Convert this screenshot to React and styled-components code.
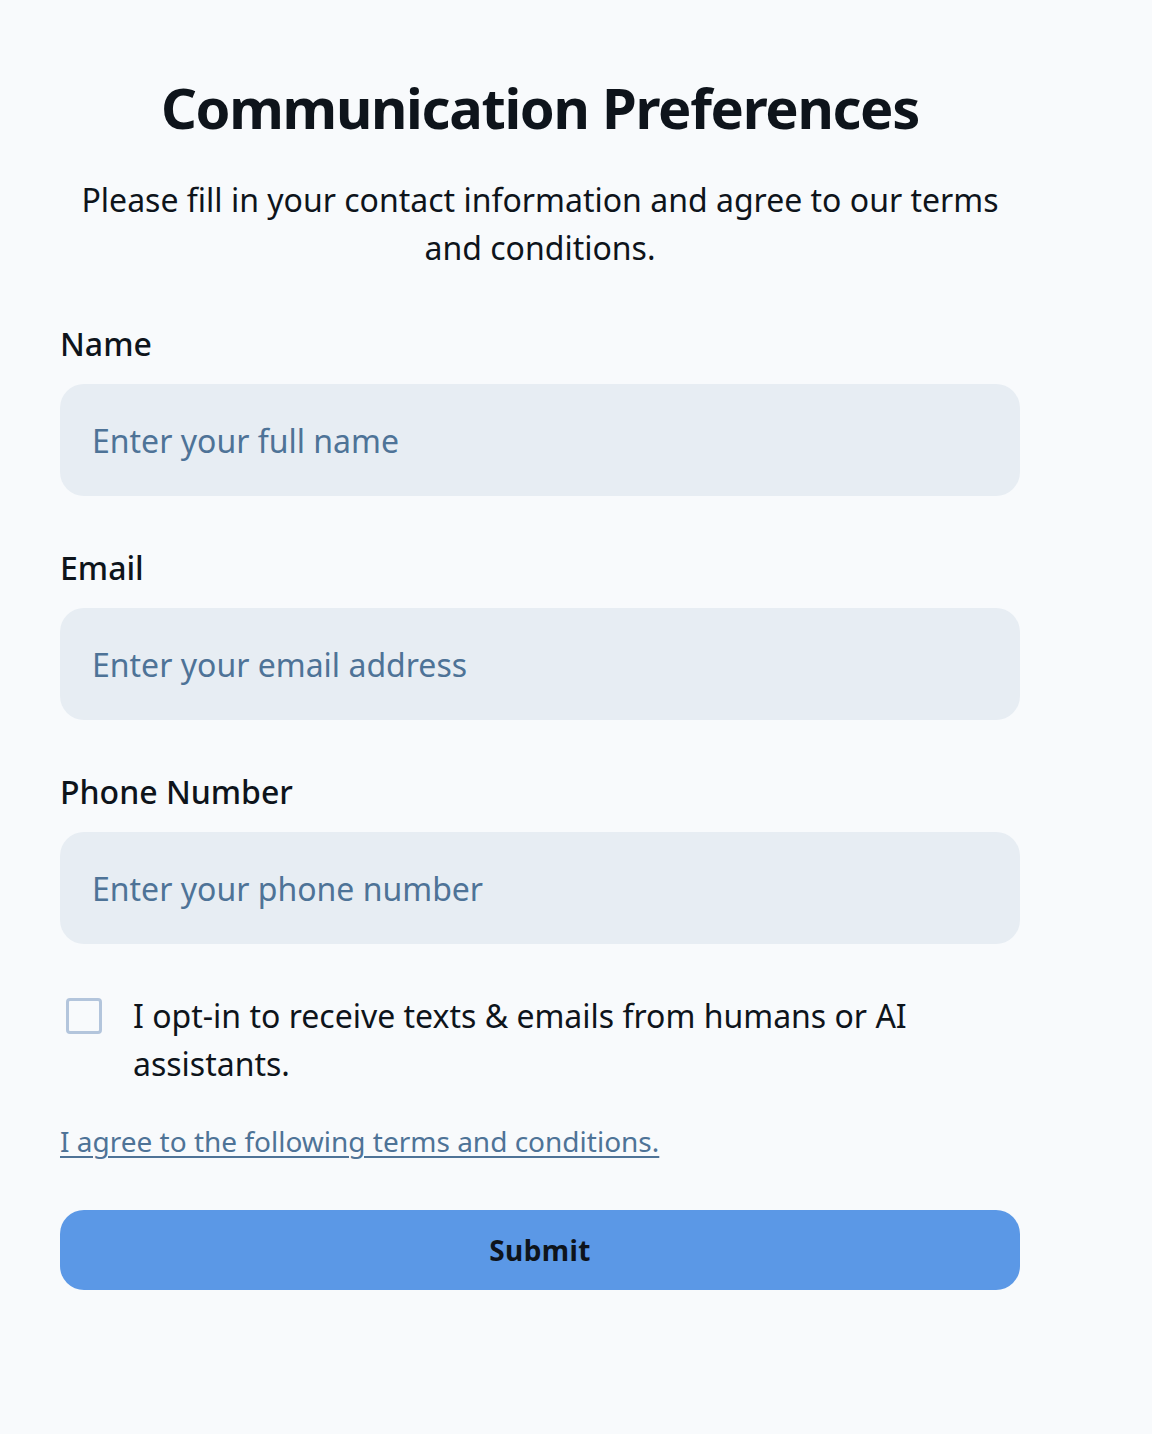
import React, { useState } from 'react';
import styled, { createGlobalStyle } from 'styled-components';

const GlobalStyle = createGlobalStyle`
  html, body {
    margin: 0;
    padding: 0;
    background: #f8fafc;
  }
  body {
    font-family: "Noto Sans", "Liberation Sans", sans-serif;
    color: #0e141b;
  }
`;

const Page = styled.main`
  min-height: 1434px;
  background: #f8fafc;
  padding-top: 72px;
  box-sizing: border-box;
`;

const Column = styled.div`
  width: 960px;
  margin-left: 60px;
  display: flex;
  flex-direction: column;
`;

const Title = styled.h1`
  margin: 0 0 34px;
  font-size: 56px;
  line-height: 70px;
  font-weight: 700;
  text-align: center;
  letter-spacing: -1.3px;
`;

const Intro = styled.p`
  margin: 0 0 24px;
  font-size: 32px;
  line-height: 48px;
  text-align: center;
`;

const Field = styled.label`
  display: flex;
  flex-direction: column;
  gap: 16px;
  padding: 24px 0;
`;

const FieldLabel = styled.span`
  font-size: 32px;
  line-height: 48px;
  font-weight: 500;
`;

const Input = styled.input`
  height: 112px;
  box-sizing: border-box;
  border: none;
  outline: none;
  border-radius: 24px;
  background: #e7edf3;
  padding: 0 32px;
  font-family: inherit;
  font-size: 32px;
  color: #0e141b;

  &::placeholder {
    color: #4e7397;
  }
`;

const OptRow = styled.label`
  display: flex;
  align-items: flex-start;
  gap: 31px;
  padding: 24px 0 24px 6px;
  cursor: pointer;
`;

const Box = styled.span`
  flex: none;
  width: 36px;
  height: 36px;
  margin-top: 6px;
  box-sizing: border-box;
  border: 3px solid #b3c5dc;
  border-radius: 4px;
  background: ${p => (p.checked ? '#5b98e6' : 'transparent')};
`;

const OptText = styled.span`
  font-size: 32px;
  line-height: 48px;
`;

const TermsLink = styled.a`
  display: block;
  padding: 8px 0 24px;
  font-size: 28px;
  line-height: 42px;
  color: #4e7397;
  text-decoration: underline;
  text-decoration-thickness: 2px;
  text-underline-offset: 4px;
`;

const ButtonWrap = styled.div`
  padding: 24px 0;
`;

const SubmitButton = styled.button`
  width: 100%;
  height: 80px;
  border: none;
  border-radius: 24px;
  background: #5b98e6;
  color: #0e141b;
  font-family: inherit;
  font-size: 28px;
  font-weight: 700;
  letter-spacing: 0.4px;
  cursor: pointer;
`;

const fields = [
  { label: 'Name', type: 'text', placeholder: 'Enter your full name' },
  { label: 'Email', type: 'email', placeholder: 'Enter your email address' },
  { label: 'Phone Number', type: 'tel', placeholder: 'Enter your phone number' }
];

function App() {
  const [optIn, setOptIn] = useState(false);

  return (
    <Page>
      <GlobalStyle />
      <Column>
        <Title>Communication Preferences</Title>
        <Intro>Please fill in your contact information and agree to our terms and conditions.</Intro>
        {fields.map(f => (
          <Field key={f.label}>
            <FieldLabel>{f.label}</FieldLabel>
            <Input type={f.type} placeholder={f.placeholder} />
          </Field>
        ))}
        <OptRow onClick={() => setOptIn(!optIn)}>
          <Box checked={optIn} />
          <OptText>I opt-in to receive texts &amp; emails from humans or AI assistants.</OptText>
        </OptRow>
        <TermsLink href="#">I agree to the following terms and conditions.</TermsLink>
        <ButtonWrap>
          <SubmitButton type="button">Submit</SubmitButton>
        </ButtonWrap>
      </Column>
    </Page>
  );
}

export default App;
